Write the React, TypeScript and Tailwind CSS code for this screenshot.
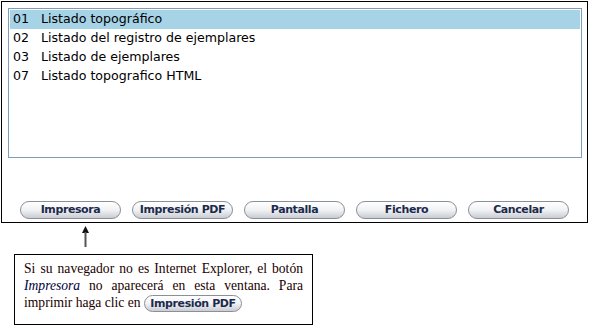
const rows = [
  { code: "01", label: "Listado topográfico" },
  { code: "02", label: "Listado del registro de ejemplares" },
  { code: "03", label: "Listado de ejemplares" },
  { code: "07", label: "Listado topografico HTML" },
];

const buttons = ["Impresora", "Impresión PDF", "Pantalla", "Fichero", "Cancelar"];

function PillButton({ label, className = "" }: { label: string; className?: string }) {
  return (
    <button
      className={
        "flex items-center justify-center rounded-full border border-[#8a8f98] bg-gradient-to-b from-white via-[#f1f2f4] to-[#c9ccd2] font-['DejaVu_Sans',sans-serif] text-[11px] font-bold tracking-[-0.4px] text-[#1c2a4d] " +
        className
      }
    >
      {label}
    </button>
  );
}

export default function App() {
  return (
    <div className="h-[334px] w-[596px] bg-white pl-[1px] pt-[1px]">
      <div className="flex h-[222px] w-[587px] flex-col border border-black">
        <div className="ml-[6px] mt-[6px] h-[150px] w-[574px] border border-[#7f9db9] p-[1px] font-['DejaVu_Sans',sans-serif] text-[12.6px] text-black">
          {rows.map((r, i) => (
            <div
              key={r.code}
              className={"flex h-[19px] items-center pl-[3px] " + (i === 0 ? "bg-[#a6d3e6]" : "")}
            >
              <span className="w-[28px]">{r.code}</span>
              <span>{r.label}</span>
            </div>
          ))}
        </div>
        <div className="ml-[18px] mt-[43px] flex gap-[11px]">
          {buttons.map((b) => (
            <PillButton key={b} label={b} className="h-[18px] w-[101px]" />
          ))}
        </div>
      </div>

      <div className="ml-[81px] mt-[3px] flex h-[21px] w-[7px] flex-col items-center">
        <svg width="7" height="21" viewBox="0 0 7 21">
          <path d="M3.5 0 L7 7 L0 7 Z" fill="#111" />
          <rect x="2.5" y="6" width="2" height="15" fill="#555" />
        </svg>
      </div>

      <div className="ml-[13px] mt-[7px] h-[71px] w-[299px] border border-black px-[9px] pt-[5px] text-justify font-['Liberation_Serif',serif] text-[13.6px] leading-[17px] text-[#1a0000]">
        Si su navegador no es Internet Explorer, el botón <i className="text-[#000040]">Impresora</i> no aparecerá en esta
        ventana. Para imprimir haga clic en{" "}
        <span className="inline-flex align-middle">
          <PillButton label="Impresión PDF" className="h-[17px] w-[98px]" />
        </span>
      </div>
    </div>
  );
}
